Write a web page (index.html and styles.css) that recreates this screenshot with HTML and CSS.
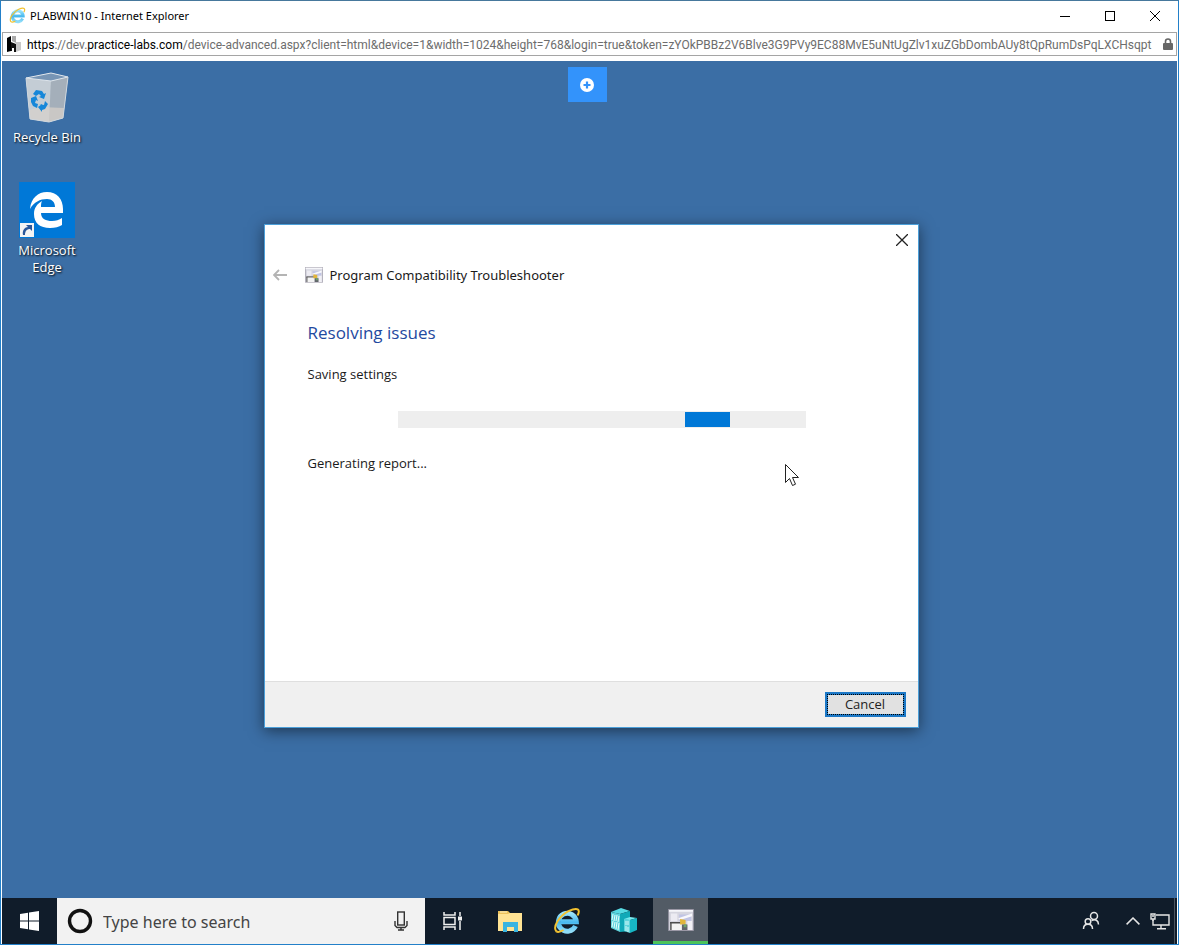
FILE: index.html
```html
<!DOCTYPE html>
<html lang="en">
<head>
    <meta charset="UTF-8">
    <meta name="viewport" content="width=device-width, initial-scale=1.0">
    <title>PLABWIN10 - Internet Explorer</title>
    <link rel="stylesheet" href="styles.css">
</head>
<body>

    <!-- shared Internet Explorer logo -->
    <svg class="defs" width="0" height="0" aria-hidden="true">
        <defs>
            <linearGradient id="ieBlue" x1="0" y1="0" x2="0" y2="1">
                <stop offset="0" stop-color="#9be4fb"/>
                <stop offset="0.5" stop-color="#48b8ee"/>
                <stop offset="1" stop-color="#8fdcf8"/>
            </linearGradient>
            <symbol id="ie" viewBox="0 0 28 28">
                <path d="M22.500 19a9 9 0 1 1 .8-4.300H8" fill="none" stroke="url(#ieBlue)" stroke-width="5"/>
                <path d="M3.500 24.500C-1 20 7 8 16 3.800c5-2.300 9.500-2.800 9.800.4.1 1.200-.4 2.800-1.300 4.300" fill="none" stroke="#f2c230" stroke-width="2"/>
                <path d="M3.300 24.200c1.500 1.500 4.200.6 7.200-1.200" fill="none" stroke="#f2c230" stroke-width="2"/>
            </symbol>
        </defs>
    </svg>

    <div class="browser">
        <header class="titlebar">
            <svg class="ie-small" width="17" height="17"><use href="#ie"/></svg>
            <span class="title">PLABWIN10 - Internet Explorer</span>
            <div class="window-buttons">
                <button type="button" aria-label="Minimize">
                    <svg width="12" height="12" viewBox="0 0 12 12"><path d="M1 6.500h10" stroke="#000" fill="none"/></svg>
                </button>
                <button type="button" aria-label="Maximize">
                    <svg width="12" height="12" viewBox="0 0 12 12"><rect x="1.500" y="1.500" width="9" height="9" stroke="#000" fill="none"/></svg>
                </button>
                <button type="button" aria-label="Close">
                    <svg width="12" height="12" viewBox="0 0 12 12"><path d="M1 1l10 10M11 1L1 11" stroke="#000" fill="none"/></svg>
                </button>
            </div>
        </header>

        <div class="address">
            <svg width="14" height="16" viewBox="0 0 14 16">
                <path d="M0 2l4-2v15l-4 1z" fill="#000"/>
                <path d="M4 6l5 2v8H7v-4H5v3H4z" fill="#111"/>
                <path d="M5 0h4v7L5 5z" fill="#aaa"/>
                <path d="M9 6h5v8l-5 2z" fill="#c8c8c8"/>
            </svg>
            <div class="url"><b>https</b>://dev.<b>practice-labs.com</b>/device-advanced.aspx?client=html&amp;device=1&amp;width=1024&amp;height=768&amp;login=true&amp;token=zYOkPBBz2V6Blve3G9PVy9EC88MvE5uNtUgZlv1xuZGbDombAUy8tQpRumDsPqLXCHsqpt</div>
            <svg width="10" height="12" viewBox="0 0 10 12">
                <path d="M2.500 6V3.500a2.500 2.500 0 0 1 5 0V6" fill="none" stroke="#666" stroke-width="1.600"/>
                <rect y="5" width="10" height="7" rx="1" fill="#666"/>
            </svg>
        </div>

        <main class="desktop">
            <button type="button" class="expand" aria-label="Expand toolbar">
                <svg width="14" height="14" viewBox="0 0 14 14">
                    <circle cx="7" cy="7" r="7" fill="#fff"/>
                    <path d="M7 3.500v7M3.500 7h7" stroke="#3393fb" stroke-width="2.200"/>
                </svg>
            </button>

            <div class="icons">
                <a href="#" class="icon">
                    <svg width="56" height="56" viewBox="0 0 56 56">
                        <path d="M7 9l25-5 17 4-5 41-14 4-19-3z" fill="#b4c0cb"/>
                        <path d="M7 9l25 3-2 41-19-3z" fill="#c4cdd5"/>
                        <path d="M32 12l17-4-5 41-14 4z" fill="#a4afba"/>
                        <path d="M7 9l25-5 17 4-17 4z" fill="#7795b5"/>
                        <path d="M10 41l12-3 23 1-1 10-14 4-19-3z" fill="#d8d2ca" opacity=".7"/>
                        <path d="M7 9l25-5 17 4-17 4z" fill="none" stroke="#dfe6ec"/>
                        <path d="M7 9l4 41 19 3 14-4 5-41" fill="none" stroke="#cfd7de"/>
                        <g fill="#1687d9">
                            <path d="M14 25l3-4 6 1 2 3 2-1-2 6-5-2 2-1-2-2-3 2z"/>
                            <path d="M12 29l5-2 2 5-2-1-1 3 3 1-1 4-4-2-2-4z"/>
                            <path d="M20 35l5 1 1-4 3 3-3 5-3 1v2l-4-5 4-3z"/>
                        </g>
                    </svg>
                    <span>Recycle Bin</span>
                </a>
                <a href="#" class="icon">
                    <svg width="56" height="56" viewBox="0 0 56 56">
                        <rect width="56" height="56" fill="#0078d7"/>
                        <path d="M11 27C12 16 19 10 28 10c10 0 16 7 16 17v4H22c0 6 5 8 11 8 4 0 7-1 10-3v7c-3 2-7 3-12 3-10 0-16-5-16-14 0-6 3-10 8-13-1 2-1 4-1 6h14c0-5-3-8-8-8-7 0-13 3-17 10z" fill="#fff"/>
                        <rect x="1" y="41" width="14" height="14" fill="#f4f4f4"/>
                        <path d="M4 53c-1-5 2-8 5-8l-2-2h6v6l-2-2c-3 0-5 2-5 6z" fill="#2b579a"/>
                    </svg>
                    <span>Microsoft Edge</span>
                </a>
            </div>

            <section class="dialog" role="dialog" aria-labelledby="dialogTitle">
                <div class="dialog-top">
                    <button type="button" class="dialog-close" aria-label="Close">
                        <svg width="12" height="12" viewBox="0 0 12 12"><path d="M0 0l12 12M12 0L0 12" stroke="#222" stroke-width="1.300"/></svg>
                    </button>
                </div>
                <div class="dialog-head">
                    <button type="button" class="back" aria-label="Back" disabled>
                        <svg width="14" height="12" viewBox="0 0 14 12"><path d="M6 1L1 6l5 5M1 6h13" fill="none" stroke="#b4b4b4" stroke-width="1.800"/></svg>
                    </button>
                    <svg width="18" height="16" viewBox="0 0 28 24"><use href="#wizard"/></svg>
                    <span id="dialogTitle">Program Compatibility Troubleshooter</span>
                </div>
                <div class="dialog-body">
                    <h1>Resolving issues</h1>
                    <p>Saving settings</p>
                    <div class="progress" role="progressbar" aria-label="Saving settings">
                        <div class="chunk"></div>
                    </div>
                    <p>Generating report...</p>
                </div>
                <footer class="dialog-footer">
                    <button type="button" class="cancel">Cancel</button>
                </footer>
            </section>

            <svg class="cursor" width="14" height="23" viewBox="0 0 14 23">
                <path d="M.5.500v18l4-4 3 7 3-1.300-3-6.700h6z" fill="#fff" stroke="#222"/>
            </svg>
        </main>

        <nav class="taskbar">
            <button type="button" class="task" aria-label="Start">
                <svg width="20" height="20" viewBox="0 0 20 20" fill="#fff">
                    <path d="M0 3l8-1.200V9.500H0zM9 1.600L19 0v9.500H9zM0 10.500h8v7.700L0 17zM9 10.500h10V20L9 18.400z"/>
                </svg>
            </button>
            <div class="search">
                <svg width="26" height="26" viewBox="0 0 26 26"><circle cx="13" cy="13" r="10.500" fill="none" stroke="#111" stroke-width="3.400"/></svg>
                <input type="text" placeholder="Type here to search" aria-label="Type here to search">
                <svg width="14" height="20" viewBox="0 0 14 20" fill="none" stroke="#333" stroke-width="1.400">
                    <rect x="3.700" y="1" width="6.600" height="13"/>
                    <path d="M1 10v4.500l2 2h8l2-2V10M7 16.500V19M4 19h6"/>
                </svg>
            </div>
            <button type="button" class="task" aria-label="Task View">
                <svg width="20" height="18" viewBox="0 0 20 18" fill="none" stroke="#f0f0f0" stroke-width="1.500">
                    <path d="M1 0v3h11V0M1 18v-3h11v3M17 0v4M17 9v9"/>
                    <rect x="1" y="5.500" width="11" height="7"/>
                    <rect x="15" y="4.500" width="4" height="4" fill="#f0f0f0" stroke="none"/>
                </svg>
            </button>
            <button type="button" class="task" aria-label="File Explorer">
                <svg width="26" height="22" viewBox="0 0 26 22">
                    <path d="M1 1h10l2 2h12v18H1z" fill="#edc25b"/>
                    <path d="M1 4h10l2-1h12v18H1z" fill="#ffe394"/>
                    <path d="M3 2h7" stroke="#fff3c8"/>
                    <path d="M6 22V12h15v10h-4v-5h-7v5z" fill="#39b4e0"/>
                </svg>
            </button>
            <button type="button" class="task" aria-label="Internet Explorer">
                <svg width="28" height="28"><use href="#ie"/></svg>
            </button>
            <button type="button" class="task" aria-label="Server Manager">
                <svg width="26" height="26" viewBox="0 0 26 26">
                    <path d="M0 4l9 2v18l-9-4z" fill="#5fd3dc"/>
                    <path d="M0 4l10-4 9 3-10 3z" fill="#58dbe4"/>
                    <path d="M9 6l10-3v20l-10 1z" fill="#11a9b8"/>
                    <path d="M2 6l-1 6M4 7l-1 6M6 7l-1 6M8 8l-1 6M2 13l-1 6M4 14l-1 6M6 14l-1 7M8 15l-1 7" stroke="#e4fdfd"/>
                    <path d="M13 11l6 1v13l-6-2z" fill="#5fd3dc"/>
                    <path d="M13 11l6-2 7 1-7 2z" fill="#7ceaf0"/>
                    <path d="M19 12l7-2v12l-7 3z" fill="#17b6c4"/>
                    <path d="M15 13v4M17 13v4M15 18v5M17 19v5" stroke="#d9fafa"/>
                </svg>
            </button>
            <button type="button" class="task active" aria-label="Program Compatibility Troubleshooter">
                <svg width="26" height="22" viewBox="0 0 28 24">
                    <symbol id="wizard" viewBox="0 0 28 24">
                        <rect x=".5" y=".5" width="27" height="23" fill="#d5d5df" stroke="#9b98a6"/>
                        <path d="M1 1h26v2H1z" fill="#f6f6fa"/>
                        <path d="M3 5h7v8H3z" fill="#ecebf2"/>
                        <path d="M12 6h13v7H12z" fill="#c0c4e4"/>
                        <path d="M11 10l15-5v3l-13 4z" fill="#f8f8fc"/>
                        <path d="M21 13h5v10h-5z" fill="#f1f0f5"/>
                        <path d="M3 15h12v8H3z" fill="#f3f3f3"/>
                        <path d="M2 15h13M3 15v8" stroke="#4d4d4d" stroke-width="1.500"/>
                        <path d="M13 11l6 1v5h-6z" fill="#e2b63a"/>
                        <path d="M15 17h6v6h-6z" fill="#62656b"/>
                        <path d="M17 17h3v3h-3z" fill="#6da668"/>
                    </symbol>
                    <use href="#wizard"/>
                </svg>
            </button>
            <div class="tray">
                <svg width="18" height="20" viewBox="0 0 18 20" fill="none" stroke="#e6e6e6" stroke-width="1.500">
                    <circle cx="12" cy="5" r="3.500"/>
                    <circle cx="6" cy="10.500" r="2.800"/>
                    <path d="M1.500 18c0-3 1.500-4.700 4.500-4.700s4.500 1.700 4.500 4.700M9.500 9.500c4-2 7 0 7 4"/>
                </svg>
                <svg width="14" height="8" viewBox="0 0 14 8" fill="none" stroke="#e6e6e6" stroke-width="1.500"><path d="M.6 7.400L7 1l6.400 6.400"/></svg>
                <svg width="20" height="18" viewBox="0 0 20 18" fill="none" stroke="#e6e6e6" stroke-width="1.400">
                    <path d="M6 3h13v10H3V8M11 13v4M7 16.800h9"/>
                    <path d="M1 2h4v5H1zM3 7v2M2 4h2"/>
                </svg>
            </div>
        </nav>
    </div>

</body>
</html>
```

FILE: styles.css
```css
* {
    box-sizing: border-box;
}

body {
    margin: 0;
    font-family: "Open Sans", "Noto Sans", sans-serif;
    font-size: 13px;
    color: #1a1a1a;
}

button {
    font-family: inherit;
    border: none;
    padding: 0;
    background: none;
}

svg {
    display: block;
    flex-shrink: 0;
}

.defs {
    position: absolute;
}

.browser {
    display: flex;
    flex-direction: column;
    height: 100vh;
    border: 1px solid #2380c9;
    border-top-color: #46789c;
    padding: 0 1px;
    background-color: #fff;
}

/* title bar */
.titlebar {
    display: flex;
    align-items: center;
    height: 31px;
    padding: 0 0 2px 7px;
    font-family: "Noto Sans", "Open Sans", sans-serif;
    font-size: 11px;
    color: #000;
}

.title {
    margin-left: 4px;
}

.window-buttons {
    display: flex;
    margin-left: auto;
}

.window-buttons button {
    display: flex;
    justify-content: center;
    align-items: center;
    width: 45px;
    height: 28px;
}

/* address bar */
.address {
    display: flex;
    align-items: center;
    height: 24px;
    margin-bottom: 5px;
    padding: 0 3px 0 4px;
    border: 1px solid #a5a5a5;
}

.url {
    flex: 1;
    min-width: 0;
    margin: 0 7px 0 6px;
    padding-top: 2px;
    overflow: hidden;
    white-space: nowrap;
    font-family: Roboto, "Open Sans", sans-serif;
    font-size: 12px;
    line-height: 18px;
    color: #6d6d6d;
}

.url b {
    font-weight: normal;
    color: #000;
}

/* desktop */
.desktop {
    position: relative;
    flex: 1;
    min-height: 0;
    background-color: #3b6ea5;
}

.expand {
    position: absolute;
    top: 6px;
    left: calc(50% - 22px);
    display: flex;
    justify-content: center;
    align-items: center;
    width: 39px;
    height: 35px;
    background-color: #3393fb;
}

.icons {
    display: flex;
    flex-direction: column;
    gap: 36px;
    width: 90px;
    padding-top: 8px;
}

.icon {
    display: flex;
    flex-direction: column;
    align-items: center;
    font-size: 13px;
    line-height: 17px;
    text-align: center;
    text-decoration: none;
    color: #fff;
    text-shadow: 1px 1px 2px #000;
}

.icon span {
    max-width: 76px;
    margin-top: 4px;
}

/* troubleshooter window */
.dialog {
    position: absolute;
    top: calc(50% - 256px);
    left: calc(50% - 326px);
    display: flex;
    flex-direction: column;
    width: 655px;
    height: 504px;
    background-color: #fff;
    border: 1px solid #4b9fd9;
    box-shadow: 0 3px 14px rgba(0, 0, 0, 0.5);
}

.dialog-top {
    display: flex;
    justify-content: flex-end;
}

.dialog-close {
    display: flex;
    justify-content: center;
    align-items: center;
    width: 32px;
    height: 31px;
}

.dialog-head {
    display: flex;
    align-items: center;
    height: 38px;
    padding-left: 8px;
    font-family: "Noto Sans", "Open Sans", sans-serif;
}

.back {
    margin-right: 18px;
}

.dialog-head span {
    margin-left: 7px;
}

.dialog-body {
    flex: 1;
    padding: 27px 43px 0;
}

.dialog-body h1 {
    margin: 0 0 19px;
    font-size: 17px;
    font-weight: normal;
    line-height: 24px;
    color: #1f4aa0;
}

.dialog-body p {
    margin: 0;
    line-height: 20px;
}

.progress {
    width: 408px;
    height: 17px;
    margin: 27px 0 25px 90px;
    padding: 1px 0;
    background-color: #eee;
}

.chunk {
    width: 45px;
    height: 100%;
    margin-left: 287px;
    background-color: #0078d7;
}

.dialog-footer {
    display: flex;
    justify-content: flex-end;
    align-items: center;
    height: 46px;
    padding-right: 12px;
    background-color: #f0f0f0;
    border-top: 1px solid #dfdfdf;
}

.cancel {
    width: 81px;
    height: 25px;
    border: 3px solid #1c78c6;
    outline: 1px dotted #000;
    outline-offset: -3px;
    background-color: #e1e1e1;
    font-size: 13px;
    line-height: 18px;
    color: #222;
}

.cursor {
    position: absolute;
    top: 403px;
    left: 783px;
}

/* taskbar */
.taskbar {
    display: flex;
    height: 46px;
    background-color: #101c2a;
}

.task {
    display: flex;
    justify-content: center;
    align-items: center;
    width: 55px;
    margin-right: 2px;
}

.task:first-child {
    margin-right: 0;
}

.task.active {
    margin-right: 0;
    background-color: #525b65;
    border-bottom: 3px solid #4cc35a;
}

.search {
    display: flex;
    align-items: center;
    width: 368px;
    padding: 0 17px 0 10px;
    background-color: #f2f2f2;
}

.search input {
    flex: 1;
    min-width: 0;
    margin: 0 10px;
    padding: 2px 0 0;
    border: none;
    background: none;
    font-family: "Noto Sans", "Open Sans", sans-serif;
    font-size: 16px;
}

.search input::placeholder {
    color: #444;
    opacity: 1;
}

.tray {
    display: flex;
    align-items: center;
    margin-left: auto;
    gap: 10px;
    margin-right: 2px;
    padding-right: 4px;
    border-right: 1px solid #4b5560;
}

.tray svg:first-child {
    margin-right: 16px;
}
```
